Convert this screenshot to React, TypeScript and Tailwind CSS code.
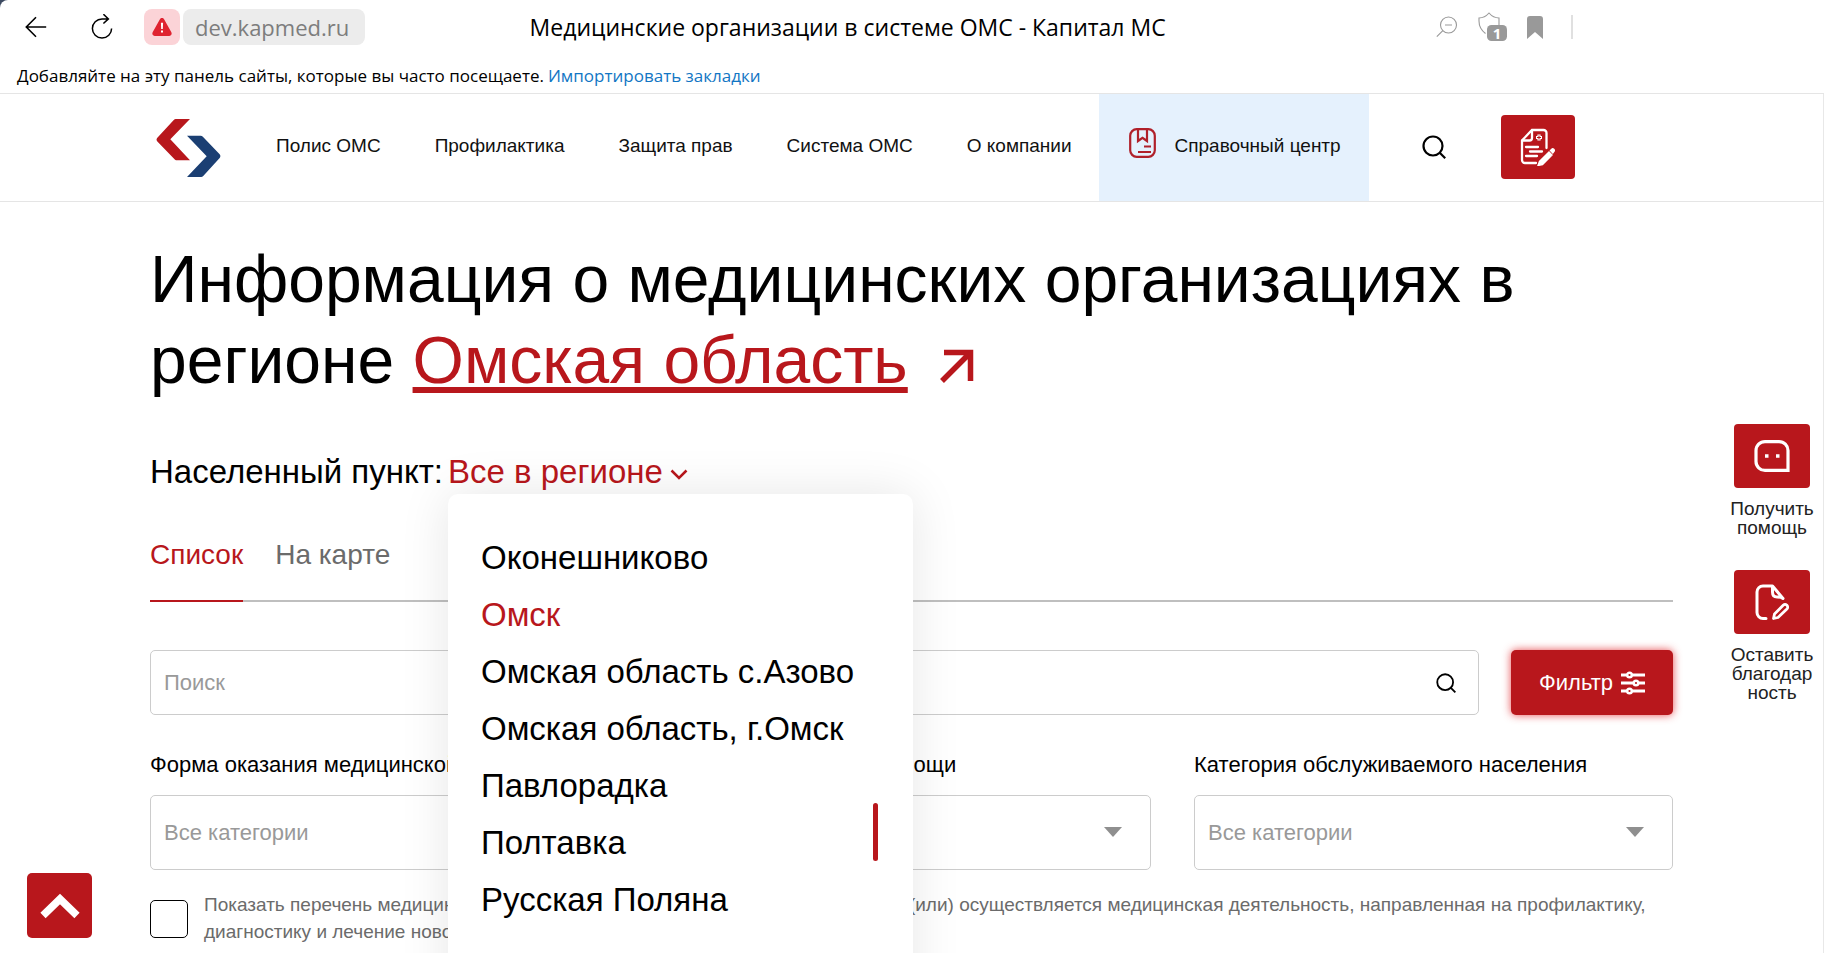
import React, { useState } from "react";

const NAV = ["Полис ОМС", "Профилактика", "Защита прав", "Система ОМС", "О компании"];

const TOWNS = [
  "Оконешниково",
  "Омск",
  "Омская область с.Азово",
  "Омская область, г.Омск",
  "Павлорадка",
  "Полтавка",
  "Русская Поляна",
];

const FILTERS = [
  { id: "form", label: "Форма оказания медицинской помощи" },
  { id: "kind", label: "Виды медицинской помощи" },
  { id: "category", label: "Категория обслуживаемого населения" },
];

function SearchIcon({ className }: { className: string }) {
  return (
    <svg viewBox="0 0 24 24" fill="none" stroke="currentColor" strokeWidth="2.2" className={className} aria-hidden="true">
      <circle cx="11" cy="11" r="9.5" />
      <path d="M17.5 17.5 23.2 23.2" />
    </svg>
  );
}

function BrowserChrome() {
  return (
    <div className="border-b border-[#e5e5e5] font-['Open_Sans','Noto_Sans',sans-serif]">
      <div className="flex h-[54px] items-center pl-6">
        <button type="button" aria-label="Назад" className="text-black">
          <svg viewBox="0 0 24 24" fill="none" stroke="currentColor" strokeWidth="1.6" className="size-6" aria-hidden="true">
            <path d="M22.2 12H2.5M12 2.3 2.3 12 12 21.7" />
          </svg>
        </button>
        <button type="button" aria-label="Обновить" className="ml-[41px] text-black">
          <svg viewBox="0 0 26 26" fill="none" stroke="currentColor" strokeWidth="1.5" className="size-[26px]" aria-hidden="true">
            <path d="M22.6 14.5a9.6 9.6 0 1 1-9.6-9.6h6.2M14.4.2l5 4.7-5 4.6" />
          </svg>
        </button>
        <div className="ml-[29px] flex size-9 items-center justify-center rounded-lg bg-[#fbd3d7]">
          <svg viewBox="0 0 24 22" className="h-5 w-[22px]" aria-hidden="true">
            <path
              d="M12 1.2c1 0 1.8.5 2.3 1.3l8 14.4c1 1.8-.2 3.9-2.3 3.9H4c-2.1 0-3.3-2.1-2.3-3.9l8-14.4C10.2 1.7 11 1.2 12 1.2Z"
              fill="#df2330"
            />
            <path d="M10.8 6.3h2.4l-.3 7h-1.8ZM10.9 14.9h2.2v2.2h-2.2Z" fill="#fff" />
          </svg>
        </div>
        <div className="ml-[3px] flex h-9 items-center rounded-lg bg-[#ececec] pr-4 pl-3 text-[22px] text-[#7d7d7d]">dev.kapmed.ru</div>
        <div className="flex-1 pr-[106px] text-center text-[23px] text-black">Медицинские организации в системе ОМС - Капитал МС</div>
        <div className="flex items-center pr-[251px] text-[#999999]">
          <svg viewBox="0 0 22 22" fill="none" stroke="currentColor" strokeWidth="1.1" className="size-[22px]" aria-hidden="true">
            <circle cx="12.5" cy="9" r="8" />
            <path d="M9 9h7M6.8 14.7.8 20.7" />
          </svg>
          <div className="relative ml-5">
            <svg viewBox="0 0 30 30" className="size-[30px]" aria-hidden="true">
              <path
                d="M7.5 21.5C3.500 18.500 1 14.500 1 9V6c3.500 0 7-1.500 10-5 3 3.500 6.500 5 10 5v8"
                fill="none"
                stroke="currentColor"
                strokeWidth="1.1"
              />
              <rect x="9" y="13" width="20" height="16" rx="4.5" fill="currentColor" />
            </svg>
            <span className="absolute bottom-px left-[9px] w-5 text-center text-[15px] leading-4 font-bold text-white">1</span>
          </div>
          <svg viewBox="0 0 16 23" fill="currentColor" className="ml-[19px] h-[23px] w-4" aria-hidden="true">
            <path d="M3 0h10a3 3 0 0 1 3 3v20l-8-7-8 7V3a3 3 0 0 1 3-3Z" />
          </svg>
          <div className="ml-7 h-6 w-0.5 bg-[#e0e0e0]" />
        </div>
      </div>
      <div className="flex h-[39px] items-center gap-1 pt-1 pl-[17px] text-[17px] text-black">
        <span>Добавляйте на эту панель сайты, которые вы часто посещаете.</span>
        <a href="#import" className="text-[#1276c4]">
          Импортировать закладки
        </a>
      </div>
    </div>
  );
}

function SiteHeader() {
  return (
    <header className="border-b border-[#e5e5e5]">
      <div className="mx-auto flex h-[107px] max-w-[1523px] items-center">
        <a href="#home" aria-label="Капитал МС" className="ml-1.5">
          <svg viewBox="0 0 65 59" className="h-[58px] w-[65px]" aria-hidden="true">
            <path d="M19.5 0H34L14 20.500 34 42H20.500c-1 0-1.500-.3-2.200-1L.8 22.800c-1.100-1.200-1.100-2.600 0-3.800L17.500 1c.7-.7 1.200-1 2-1Z" fill="#b8171c" />
            <path d="M31 17h13.800c1 0 1.600.3 2.300 1l17.100 17.900c1 1.200 1 2.600 0 3.800L47.500 58c-.7.7-1.300 1-2.200 1H31l20-21.200Z" fill="#1b3f73" />
          </svg>
        </a>
        <nav className="ml-7 flex h-full items-center text-[19px] text-[#111111]">
          {NAV.map((item) => (
            <a key={item} href="#nav" className="px-[27px] pb-[3px] whitespace-nowrap">
              {item}
            </a>
          ))}
          <a href="#help" className="flex h-full w-[270px] items-center gap-[19px] bg-[#e5f1fd] pb-[3px] pl-[30px] whitespace-nowrap">
            <svg viewBox="0 0 27 30" fill="none" stroke="#b0202a" strokeWidth="2.2" className="mb-1.5 h-[30px] w-[27px]" aria-hidden="true">
              <rect x="1.2" y="1.2" width="24.6" height="27.6" rx="6.5" />
              <path d="M9 1v12l4.500-3.200L18 13V1M15 18.500h7M9 24h13" />
            </svg>
            Справочный центр
          </a>
        </nav>
        <button type="button" aria-label="Поиск по сайту" className="mb-0.5 ml-[53px] text-black">
          <SearchIcon className="size-6" />
        </button>
        <button type="button" aria-label="Оформить заявление" className="mb-0.5 ml-[55px] flex h-16 w-[74px] items-center justify-center rounded-[4px] bg-[#b8171c]">
          <svg viewBox="0 0 36 38" fill="none" stroke="#fff" strokeWidth="2.3" strokeLinecap="round" className="h-[38px] w-9" aria-hidden="true">
            <path d="M26.5 20V5a3 3 0 0 0-3-3H12L2 12.500V32a3 3 0 0 0 3 3h11" />
            <path d="M12 2.500V10a2.500 2.500 0 0 1-2.500 2.500H2.500M6 19h12M10 23.500h12M6 28h11" />
            <path d="M19 6.500v6M16 9.500h6" strokeWidth="3.2" strokeLinecap="butt" />
            <path d="M19 7.500v4M17 9.500h4" stroke="#b8171c" strokeWidth="1" strokeLinecap="butt" />
            <path d="m29 24-9.500 9.500-1.500 4 4.500-1L32 27ZM30.500 22.500l1.500-1.500c1-.8 3 1 2 2.300l-1.200 1.600Z" fill="#fff" strokeWidth="1.4" />
          </svg>
        </button>
      </div>
    </header>
  );
}

function TownPicker() {
  const [open, setOpen] = useState(true);
  const [town, setTown] = useState("Омск");
  return (
    <div className="relative">
      <button type="button" onClick={() => setOpen(!open)} aria-expanded={open} className="flex items-center gap-[7px] text-[#b8171c]">
        Все в регионе
        <svg viewBox="0 0 18 11" fill="none" stroke="currentColor" strokeWidth="2.5" className="mt-1 h-[11px] w-[18px]" aria-hidden="true">
          <path d="m1.5 1.5 7.500 7.500 7.500-7.500" />
        </svg>
      </button>
      {open && (
        <div className="absolute top-[42px] left-0 z-10 h-[560px] w-[465px] rounded-[10px] bg-white pt-[35px] shadow-[0_0_50px_rgba(0,0,0,0.1)]">
          <ul>
            {TOWNS.map((name) => (
              <li key={name}>
                <button
                  type="button"
                  onClick={() => setTown(name)}
                  className={
                    name === town
                      ? "block w-full pl-[33px] text-left text-[33px] leading-[57px] text-[#b8171c]"
                      : "block w-full pl-[33px] text-left text-[33px] leading-[57px] text-black"
                  }
                >
                  {name}
                </button>
              </li>
            ))}
          </ul>
          <div className="absolute top-[309px] right-[35px] h-[58px] w-[5px] rounded-full bg-[#b8171c]" />
        </div>
      )}
    </div>
  );
}

function SideActions() {
  return (
    <aside className="absolute top-[424px] right-[8px] flex w-[88px] flex-col items-center gap-[33px] text-center text-[19px] leading-[19px] text-[#222222]">
      <a href="#support" className="flex flex-col items-center gap-[11px]">
        <span className="flex h-16 w-[76px] items-center justify-center rounded-[4px] bg-[#b8171c]">
          <svg viewBox="0 0 36 32" fill="none" stroke="#fff" strokeWidth="3.2" className="h-8 w-9" aria-hidden="true">
            <path d="M11 1.600h14a9 9 0 0 1 9 9v19.800H11a9 9 0 0 1-9-9v-10.800a9 9 0 0 1 9-9Z" />
            <path d="M11 16h3.500M22 16h3.500" strokeWidth="3.5" />
          </svg>
        </span>
        <span>
          Получить
          <br />
          помощь
        </span>
      </a>
      <a href="#thanks" className="flex flex-col items-center gap-[11px]">
        <span className="flex h-16 w-[76px] items-center justify-center rounded-[4px] bg-[#b8171c]">
          <svg viewBox="0 0 34 36" fill="none" stroke="#fff" strokeWidth="3" strokeLinecap="round" strokeLinejoin="round" className="h-9 w-[34px]" aria-hidden="true">
            <path d="M11 34.500H8a6 6 0 0 1-6-6V8a6 6 0 0 1 6-6h9.500L28 14.500c-2-1.500-4-1.500-6-1.500-3 0-4.500-2-4.500-5V2" />
            <path d="m19.500 30 8.700-8.700a2.600 2.600 0 0 1 3.700 3.700L23 33.500l-4.500 1Z" strokeWidth="2.8" />
          </svg>
        </span>
        <span>
          Оставить
          <br />
          благодар
          <br />
          ность
        </span>
      </a>
    </aside>
  );
}

export default function App() {
  return (
    <div className="bg-[#3d4a61]">
      <div className="relative min-h-screen overflow-hidden rounded-tl-lg bg-white font-['Liberation_Sans',Arial,sans-serif] text-black">
        <BrowserChrome />
        <div className="border-r border-[#e8e8e8]">
          <SiteHeader />
          <main className="mx-auto max-w-[1523px] pb-3">
            <h1 className="pt-[37px] text-[66px] leading-[81px]">
              Информация о медицинских организациях в<br />
              регионе{" "}
              <a href="#region" className="text-[#b8171c] underline decoration-[6px] underline-offset-[4px]">
                Омская область
              </a>
              <svg viewBox="0 0 34 34" fill="none" stroke="#b8171c" strokeWidth="5.5" className="ml-8 inline-block size-[34px] align-baseline" aria-hidden="true">
                <path d="M4 3.500h26.500V32M30 4 2 32" />
              </svg>
            </h1>

            <div className="mt-[51px] flex gap-[5px] text-[33px] leading-[40px]">
              <span>Населенный пункт:</span>
              <TownPicker />
            </div>

            <div role="tablist" className="mt-[47px] flex gap-8 border-b-2 border-[#bfbfbf] text-[28px] leading-8">
              <button type="button" role="tab" aria-selected="true" className="-mb-0.5 border-b-2 border-[#b8171c] pb-[29px] text-[#b8171c]">
                Список
              </button>
              <button type="button" role="tab" aria-selected="false" className="pb-[29px] text-[#6b6b6b]">
                На карте
              </button>
            </div>

            <form className="mt-12" onSubmit={(e) => e.preventDefault()}>
              <div className="flex gap-8">
                <div className="relative flex-1">
                  <input
                    type="search"
                    aria-label="Поиск"
                    placeholder="Поиск"
                    className="h-[65px] w-full rounded-[5px] border border-[#cccccc] pr-14 pl-[13px] text-[22px] placeholder:text-[#999999]"
                  />
                  <button type="submit" aria-label="Найти" className="absolute top-[23px] right-[23px]">
                    <SearchIcon className="size-5" />
                  </button>
                </div>
                <button
                  type="button"
                  className="flex h-[65px] w-[162px] items-center justify-center gap-2 rounded-[5px] bg-[#b8171c] text-[22px] text-white shadow-[0_0_8px_rgba(224,32,38,0.8)]"
                >
                  Фильтр
                  <svg viewBox="0 0 24 24" fill="none" stroke="#fff" strokeWidth="3" className="size-6" aria-hidden="true">
                    <path d="M0 4h6M11 4h13M0 12h14M18 12h6M0 20h6M11 20h13" />
                    <g fill="#b8171c" strokeWidth="2.4">
                      <circle cx="8.5" cy="4" r="2.3" />
                      <circle cx="15" cy="12" r="2.3" />
                      <circle cx="8.5" cy="20" r="2.3" />
                    </g>
                  </svg>
                </button>
              </div>

              <div className="mt-9 grid grid-cols-3 gap-[43px]">
                {FILTERS.map((f) => (
                  <div key={f.id}>
                    <label htmlFor={f.id} className="block text-[22px] leading-7 whitespace-nowrap">
                      {f.label}
                    </label>
                    <div className="relative mt-4">
                      <select
                        id={f.id}
                        className="h-[75px] w-full appearance-none rounded-[5px] border border-[#cccccc] bg-white pl-[13px] text-[22px] text-[#999999]"
                      >
                        <option>Все категории</option>
                      </select>
                      <svg viewBox="0 0 18 10" fill="#8f8f8f" className="pointer-events-none absolute top-8 right-[29px] h-[10px] w-[18px]" aria-hidden="true">
                        <path d="M0 0h18L9 10Z" />
                      </svg>
                    </div>
                  </div>
                ))}
              </div>

              <label className="mt-[21px] flex items-start text-[19px] leading-[27px] text-[#6b6b6b]">
                <input type="checkbox" className="mt-[9px] size-[38px] shrink-0 appearance-none rounded-[5px] border border-black bg-white checked:bg-[#b8171c]" />
                <span className="ml-4">
                  Показать перечень медицинских организаций, в которых проводится помощь и (или) осуществляется медицинская деятельность, направленная на профилактику,
                  диагностику и лечение новой коронавирусной инфекции
                </span>
              </label>
            </form>
          </main>
        </div>

        <SideActions />

        <button type="button" aria-label="Наверх" className="absolute top-[873px] left-[27px] flex size-[65px] items-center justify-center rounded-[5px] bg-[#b8171c]">
          <svg viewBox="0 0 40 26" fill="none" stroke="#fff" strokeWidth="7.5" className="h-[26px] w-10" aria-hidden="true">
            <path d="m3 22.500 17-16.500 17 16.500" />
          </svg>
        </button>
      </div>
    </div>
  );
}
